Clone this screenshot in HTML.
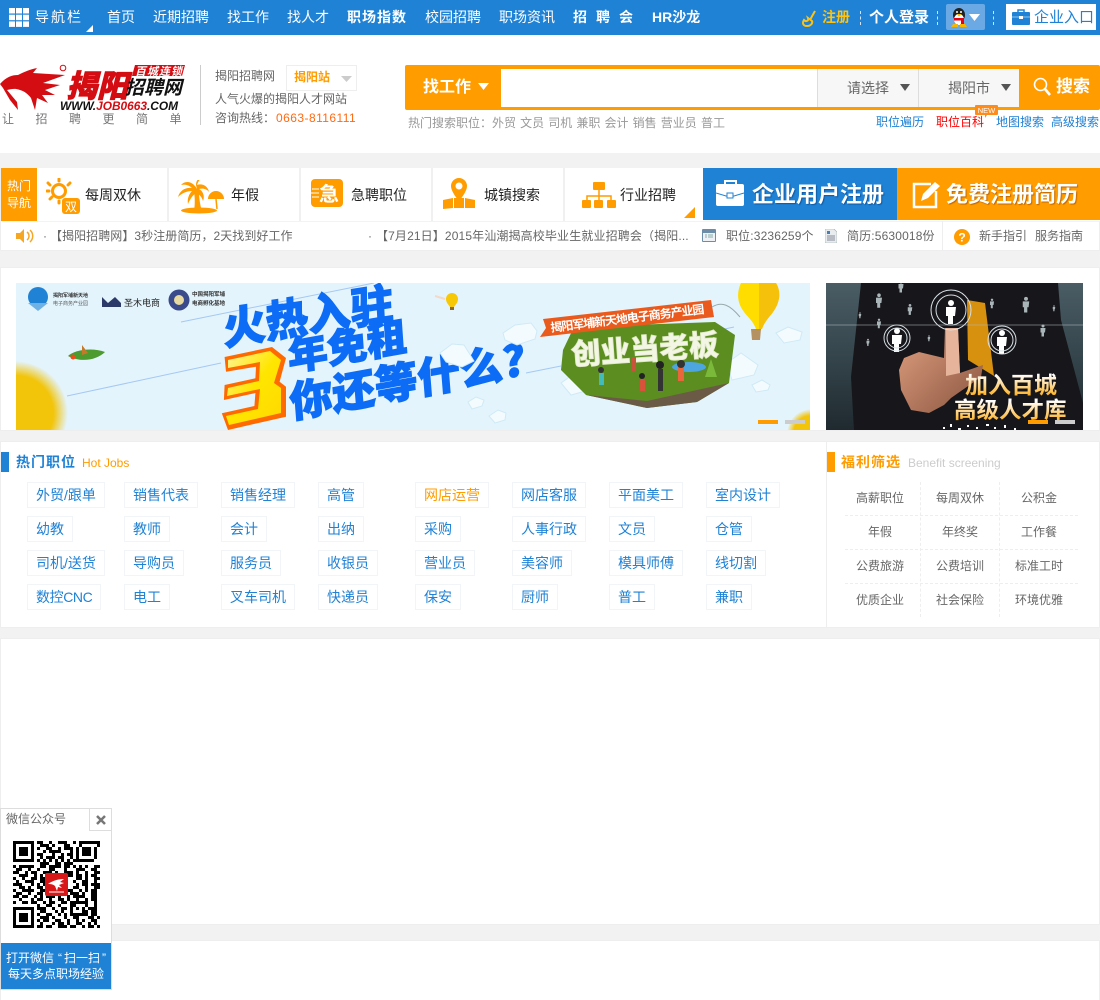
<!DOCTYPE html>
<html lang="zh"><head><meta charset="utf-8"><title>揭阳招聘网</title>
<style>
*{margin:0;padding:0;box-sizing:border-box}
html,body{width:1100px;height:1000px;overflow:hidden;background:#fff}
body{position:relative;font:12px/16px "Liberation Sans","WenQuanYi Zen Hei","Noto Sans CJK SC",sans-serif;color:#666;text-spacing-trim:space-all}
.a,.t,svg.a{position:absolute}
.t{white-space:nowrap}
.g{position:absolute;left:0;width:1100px;background:#f2f2f2}
.p{position:absolute;left:0;width:1100px;background:#fff;border:1px solid #eee}
.n{top:8px;font-size:14px;line-height:19px;color:#fff;position:absolute;white-space:nowrap}
.n.b{font-weight:bold}
.tag{position:absolute;height:26px;line-height:24px;font-size:14px;padding:0 8px;border:1px solid #f2f5f7;color:#1f82d5;white-space:nowrap;background:#fff}
.w{position:absolute;width:76px;text-align:center;color:#666;line-height:16px;white-space:nowrap}
.c{position:absolute;top:168px;height:53px;background:#fff;border-right:2px solid #f0f0f0}
.l{position:absolute;top:114px;line-height:16px;color:#1f82d5;white-space:nowrap}
</style></head><body>

<!-- top nav -->
<div class="a" style="left:0;top:0;width:1100px;height:35px;background:#1f82d5"></div>
<svg class="a" style="left:9px;top:8px" width="20" height="19" fill="#fff"><rect x="0" y="0" width="6" height="5.500"/><rect x="7" y="0" width="6" height="5.500"/><rect x="14" y="0" width="6" height="5.500"/><rect x="0" y="6.700" width="6" height="5.500"/><rect x="7" y="6.700" width="6" height="5.500"/><rect x="14" y="6.700" width="6" height="5.500"/><rect x="0" y="13.400" width="6" height="5.500"/><rect x="7" y="13.400" width="6" height="5.500"/><rect x="14" y="13.400" width="6" height="5.500"/></svg>
<div class="n" style="left:35px;letter-spacing:2px">导航栏</div>
<svg class="a" style="left:86px;top:25px" width="7" height="7"><path d="M7 0V7H0z" fill="#fff"/></svg>
<div class="n" style="left:107px">首页</div>
<div class="n" style="left:153px">近期招聘</div>
<div class="n" style="left:227px">找工作</div>
<div class="n" style="left:287px">找人才</div>
<div class="n b" style="left:347px;letter-spacing:1px">职场指数</div>
<div class="n" style="left:425px">校园招聘</div>
<div class="n" style="left:499px">职场资讯</div>
<div class="n b" style="left:573px;letter-spacing:9px">招聘会</div>
<div class="n b" style="left:652px">HR沙龙</div>

<svg class="a" style="left:801px;top:10px" width="18" height="17"><path d="M14 1 9.500 9M3 10c-2 3-1 6 3 6s6-3 5-5l-4-3c1 3-2 4-4 2z" fill="none" stroke="#ffc20e" stroke-width="2"/></svg>
<div class="n b" style="left:822px;color:#ffc20e">注册</div>
<div class="a" style="left:860px;top:11px;height:14px;border-left:1px dashed #cfe4f6"></div>
<div class="n b" style="left:869px;font-size:15px">个人登录</div>
<div class="a" style="left:937px;top:11px;height:14px;border-left:1px dashed #cfe4f6"></div>
<div class="a" style="left:946px;top:4px;width:39px;height:26px;background:#6aa9e4;border-radius:2px"></div>
<svg class="a" style="left:950px;top:8px" width="32" height="20"><ellipse cx="9" cy="7" rx="6" ry="7" fill="#222"/><ellipse cx="9" cy="11.500" rx="5" ry="5.500" fill="#fff"/><path d="M4 10h10v2.500H4z" fill="#e60012"/><path d="M11 12h3v4h-3z" fill="#e60012"/><path d="M3 16h5v3H1zM10 16h5l2 3h-7z" fill="#f7b500"/><path d="M6.500 6h5L9 8.500z" fill="#f7b500"/><circle cx="7" cy="4" r="1" fill="#fff"/><circle cx="11" cy="4" r="1" fill="#fff"/><path d="M19 6h11l-5.500 7z" fill="#fff"/></svg>
<div class="a" style="left:993px;top:11px;height:14px;border-left:1px dashed #cfe4f6"></div>
<div class="a" style="left:1006px;top:4px;width:90px;height:26px;background:#fff"></div>
<svg class="a" style="left:1012px;top:9px" width="18" height="17"><path d="M6 3V1h6v2" fill="none" stroke="#1f82d5" stroke-width="1.500"/><rect y="3" width="18" height="13" rx="1" fill="#1f82d5"/><path d="M0 8l18 0" stroke="#8cc4ef"/><rect x="7" y="7" width="4" height="3" fill="#fff"/></svg>
<div class="n" style="left:1034px;top:8px;font-size:15px;color:#1f82d5">企业入口</div>

<!-- logo -->
<svg class="a" style="left:0;top:62px" width="190" height="62">
<path d="M0 22C6 15 12 13 18 13 24 10 31 7 37 6L33 11 65 13 43 21 60 23 45 28 55 33 42 33 48 41 37 36 35 48 31 36C28 32 24 29 20 28 15 26 11 27 7 28L17 40 18 48 10 38 3 26Z" fill="#d40d12"/>
<circle cx="63" cy="6" r="2.800" fill="none" stroke="#d40d12"/>
<text x="66" y="35" font-family="'Noto Sans CJK SC',sans-serif" font-size="31" font-weight="900" font-style="italic" fill="#d40d12" stroke="#d40d12" stroke-width=".9">揭阳</text>
<path d="M135 3h50l-3 11h-50z" fill="#d40d12"/>
<text x="135" y="13" font-family="'Noto Sans CJK SC',sans-serif" font-size="11" font-weight="bold" font-style="italic" fill="#fff" letter-spacing="1">百城连锁</text>
<text x="125" y="32" font-family="'Noto Sans CJK SC',sans-serif" font-size="19" font-weight="bold" font-style="italic" fill="#111">招聘网</text>
<text x="60" y="48" font-family="'Liberation Sans',sans-serif" font-size="11.900" font-weight="bold" font-style="italic" fill="#111">WWW.<tspan fill="#d40d12">JOB0663</tspan>.COM</text>
</svg>
<div class="t" style="left:2px;top:111px;color:#777;letter-spacing:21.500px">让招聘更简单</div>
<div class="a" style="left:200px;top:65px;width:1px;height:60px;background:#ccc"></div>
<div class="t" style="left:215px;top:68px">揭阳招聘网</div>
<div class="a" style="left:286px;top:65px;width:71px;height:26px;border:1px solid #eee"></div>
<div class="t" style="left:294px;top:69px;font-weight:bold;color:#ff9c00">揭阳站</div>
<svg class="a" style="left:341px;top:76px" width="11" height="6"><path d="M0 0h11L5.500 6z" fill="#ccc"/></svg>
<div class="t" style="left:215px;top:91px">人气火爆的揭阳人才网站</div>
<div class="t" style="left:215px;top:110px">咨询热线：</div>
<div class="t" style="left:276px;top:110px;color:#ff6a13;letter-spacing:.45px">0663-8116111</div>

<!-- search -->
<div class="a" style="left:405px;top:65px;width:695px;height:45px;background:#ff9c00;border-radius:2px"></div>
<div class="t" style="left:423px;top:78px;font-size:16px;line-height:20px;font-weight:bold;color:#fff">找工作</div>
<svg class="a" style="left:478px;top:83px" width="11" height="7"><path d="M0 0h11L5.500 7z" fill="#fff"/></svg>
<div class="a" style="left:501px;top:69px;width:518px;height:38px;background:#fff"></div>
<div class="a" style="left:817px;top:69px;width:101px;height:38px;background:#f7f7f7;border-left:1px solid #ddd"></div>
<div class="a" style="left:918px;top:69px;width:101px;height:38px;background:#f7f7f7;border-left:1px solid #ddd"></div>
<div class="t" style="left:847px;top:79px;font-size:14px;line-height:18px;color:#666">请选择</div>
<div class="t" style="left:948px;top:79px;font-size:14px;line-height:18px;color:#666">揭阳市</div>
<svg class="a" style="left:900px;top:84px" width="10" height="7"><path d="M0 0h10L5 7z" fill="#555"/></svg>
<svg class="a" style="left:1001px;top:84px" width="10" height="7"><path d="M0 0h10L5 7z" fill="#555"/></svg>
<svg class="a" style="left:1033px;top:77px" width="19" height="20"><circle cx="7.500" cy="7.500" r="6" fill="none" stroke="#fff" stroke-width="1.600"/><path d="M12 12l5 6" stroke="#fff" stroke-width="2.600"/></svg>
<div class="t" style="left:1056px;top:77px;font-size:17px;line-height:20px;font-weight:bold;color:#fff">搜索</div>

<div class="t" style="left:408px;top:115px;color:#999;word-spacing:.8px">热门搜索职位：外贸 文员 司机 兼职 会计 销售 营业员 普工</div>
<div class="l" style="left:876px">职位遍历</div>
<div class="l" style="left:936px;color:#f00">职位百科</div>
<div class="l" style="left:996px">地图搜索</div>
<div class="l" style="left:1051px">高级搜索</div>
<svg class="a" style="left:975px;top:105px" width="24" height="13"><path d="M1 0h21a1 1 0 0 1 1 1v8a1 1 0 0 1-1 1H12l-2 3v-3H1a1 1 0 0 1-1-1V1a1 1 0 0 1 1-1z" fill="#ff8c1a"/><text x="11.500" y="8" text-anchor="middle" font-family="'Liberation Sans',sans-serif" font-size="7.500" fill="#fff">NEW</text></svg>

<!-- grey bands -->
<div class="g" style="top:153px;height:15px"></div>
<div class="g" style="top:251px;height:16px"></div>
<div class="g" style="top:430px;height:11px"></div>
<div class="g" style="top:627px;height:11px"></div>
<div class="g" style="top:924px;height:16px"></div>

<!-- hot nav -->
<div class="a" style="left:0;top:168px;width:1px;height:83px;background:#eee"></div>
<div class="a" style="left:1px;top:168px;width:36px;height:53px;background:#ff9c00"></div>
<div class="t" style="left:7px;top:178px;color:#fff;line-height:17px">热门<br>导航</div>
<div class="c" style="left:37px;width:132px"></div>
<div class="c" style="left:169px;width:132px"></div>
<div class="c" style="left:301px;width:132px"></div>
<div class="c" style="left:433px;width:132px"></div>
<div class="c" style="left:565px;width:138px;border:0"></div>

<svg class="a" style="left:46px;top:178px" width="36" height="36"><circle cx="13" cy="13" r="6.500" fill="none" stroke="#ff9c00" stroke-width="3"/><g stroke="#ff9c00" stroke-width="3" stroke-linecap="round"><path d="M13 1v2M13 23v2M1 13h2M2 5l2 2M24 5l-2 2M4 21l2-2"/></g><rect x="16" y="20" width="18" height="16" rx="3" fill="#ff9c00"/><text x="25" y="33" text-anchor="middle" font-size="12" fill="#fff" font-family="'WenQuanYi Zen Hei',sans-serif">双</text></svg>
<div class="t" style="left:85px;top:186px;font-size:14px;line-height:18px;color:#222">每周双休</div>
<svg class="a" style="left:178px;top:180px" width="48" height="35" fill="#ff9c00"><path d="M19 9C15 1 7 0 3 5c4-1 8 0 11 3C8 7 2 10 0 17c4-4 9-6 14-6-3 3-5 8-4 13 2-5 5-9 8-11 3 1 6 4 7 8 2-5 0-10-4-12 4-1 8 0 10 3-1-6-7-9-12-7 1-3 2-5 4-6-3-1-5 2-5 6z"/><path d="M16 11h5c0 7 1 14 3 20h-8c1-6 1-13 0-20z"/><path d="M30 19a8 8 0 0 1 16 0z"/><path d="M38 19l1 10" stroke="#ff9c00" stroke-width="1.500"/><ellipse cx="21" cy="30.500" rx="18" ry="3"/></svg>
<div class="t" style="left:231px;top:186px;font-size:14px;line-height:18px;color:#222">年假</div>
<svg class="a" style="left:311px;top:179px" width="33" height="29"><rect width="32" height="28" rx="4" fill="#ff9c00"/><path d="M1 10h7M0 14h8M1 18h7" stroke="#fff" stroke-width="1"/><text x="18" y="22" text-anchor="middle" font-size="20" font-weight="bold" fill="#fff" font-family="'Noto Sans CJK SC',sans-serif">急</text></svg>
<div class="t" style="left:351px;top:186px;font-size:14px;line-height:18px;color:#222">急聘职位</div>
<svg class="a" style="left:442px;top:178px" width="34" height="32" fill="#ff9c00"><path fill-rule="evenodd" d="M17 0a8 8 0 0 1 8 8c0 6-8 15-8 15S9 14 9 8a8 8 0 0 1 8-8zm0 4.500a3.500 3.500 0 1 0 0 7 3.500 3.500 0 0 0 0-7z"/><path d="M1 22l10-2v10l-10 1zM12 20l10 0v10H12zM23 20l10 2v8l-10 0z"/></svg>
<div class="t" style="left:484px;top:186px;font-size:14px;line-height:18px;color:#222">城镇搜索</div>
<svg class="a" style="left:582px;top:182px" width="34" height="26" fill="#ff9c00"><rect x="11" y="0" width="12" height="8" rx="1"/><path d="M17 8v6M5 18v-4h24v4" fill="none" stroke="#ff9c00" stroke-width="1.500"/><path d="M17 14v4" stroke="#ff9c00" stroke-width="1.500"/><rect x="0" y="18" width="9" height="8" rx="1"/><rect x="12" y="18" width="9" height="8" rx="1"/><rect x="25" y="18" width="9" height="8" rx="1"/></svg>
<div class="t" style="left:620px;top:186px;font-size:14px;line-height:18px;color:#222">行业招聘</div>
<svg class="a" style="left:684px;top:207px" width="11" height="11"><path d="M11 0v11H0z" fill="#ff9c00"/></svg>

<div class="a" style="left:703px;top:168px;width:194px;height:52px;background:#1f82d5"></div>
<div class="a" style="left:897px;top:168px;width:203px;height:52px;background:#ff9c00"></div>
<svg class="a" style="left:716px;top:180px" width="29" height="27"><path d="M9 5V1h11v4" fill="none" stroke="#fff" stroke-width="2"/><rect y="4" width="28" height="22" rx="2" fill="#fff"/><path d="M0 13l10 3h8l10-3" fill="none" stroke="#1f82d5"/><rect x="11" y="13" width="6" height="5" fill="#fff" stroke="#1f82d5"/></svg>
<div class="t" style="left:752px;top:182px;font-size:22px;line-height:26px;font-weight:bold;color:#fff;text-shadow:1px 1px 1px rgba(0,50,110,.5)">企业用户注册</div>
<svg class="a" style="left:912px;top:180px" width="29" height="29"><path d="M19 4H2v23h22V11" fill="none" stroke="#fff" stroke-width="2.500"/><path d="M9 21l2-7L23 2l5 4-12 12z" fill="#fff"/></svg>
<div class="t" style="left:946px;top:182px;font-size:22px;line-height:26px;font-weight:bold;color:#fff;text-shadow:1px 1px 1px rgba(150,70,0,.6)">免费注册简历</div>

<!-- ticker -->
<div class="a" style="left:0;top:221px;width:1100px;height:30px;background:#fff;border:1px solid #eee;border-top:1px solid #f3f3f3"></div>
<svg class="a" style="left:16px;top:229px" width="18" height="14"><path d="M0 4h4l4-4v14l-4-4H0z" fill="#f5a623"/><path d="M11 3a5 5 0 0 1 0 8M14 1a8 8 0 0 1 0 12" fill="none" stroke="#f5a623" stroke-width="1.500"/></svg>
<div class="t" style="left:43px;top:228px">·</div>
<div class="t" style="left:50px;top:228px;letter-spacing:.06px">【揭阳招聘网】3秒注册简历，2天找到好工作</div>
<div class="t" style="left:368px;top:228px">·</div>
<div class="t" style="left:376px;top:228px;letter-spacing:.13px">【7月21日】2015年汕潮揭高校毕业生就业招聘会（揭阳...</div>
<svg class="a" style="left:702px;top:229px" width="14" height="13"><rect width="14" height="13" rx="1" fill="#6c8ca8"/><rect x="1" y="4" width="12" height="8" fill="#eef2f6"/><path d="M3 6h2M6 6h5M3 8h2M6 8h5" stroke="#8aa"/></svg>
<div class="t" style="left:726px;top:228px;letter-spacing:.15px">职位:3236259个</div>
<svg class="a" style="left:825px;top:229px" width="12" height="14"><path d="M0 0h9l3 3v11H0z" fill="#e8ecef" stroke="#9aa" stroke-width=".6"/><path d="M2 2h3v3H2z" fill="#4a7fb5"/><path d="M2 7h8M2 9h8M2 11h8" stroke="#889"/></svg>
<div class="t" style="left:847px;top:228px;letter-spacing:.15px">简历:5630018份</div>
<div class="a" style="left:942px;top:221px;width:1px;height:30px;background:#eee"></div>
<svg class="a" style="left:954px;top:229px" width="16" height="16"><circle cx="8" cy="8" r="8" fill="#ff9c00"/><text x="8" y="12.500" text-anchor="middle" font-size="12" font-weight="bold" fill="#fff" font-family="'Liberation Sans',sans-serif">?</text></svg>
<div class="t" style="left:979px;top:228px">新手指引</div>
<div class="t" style="left:1035px;top:228px">服务指南</div>

<!-- banners -->
<div class="p" style="top:267px;height:164px"></div>
<svg class="a" style="left:16px;top:283px" width="794" height="147" viewBox="0 0 794 147">
<defs>
<radialGradient id="sun"><stop offset=".72" stop-color="#f2c40a"/><stop offset="1" stop-color="#f2c40a" stop-opacity="0"/></radialGradient>
<linearGradient id="yl" x1="0" x2="1" y1="0" y2="1"><stop offset="0" stop-color="#fff59a"/><stop offset=".5" stop-color="#ffe600"/><stop offset="1" stop-color="#ffd800"/></linearGradient>
</defs>
<rect width="794" height="147" fill="#e3f4fd"/>
<circle cx="0" cy="130" r="52" fill="url(#sun)"/>
<circle cx="795" cy="150" r="24" fill="url(#sun)"/>
<path d="M165 39 358 0M51 113 205 80M510 90 545 83M690 50 718 44" stroke="#a5c8f3" stroke-width="1" fill="none"/>
<g font-family="'Liberation Sans','Noto Sans CJK SC',sans-serif" font-weight="bold" fill="#fff">
<circle cx="22" cy="14" r="10" fill="#1f82d5"/><path d="M12 20h20l-10 8z" fill="#6fb0e5"/>
<circle cx="163" cy="17" r="10.500" fill="#3a4a8a"/><circle cx="163" cy="17" r="5" fill="#e8d9a0"/>
<path d="M86 14l6 6 7-6 6 6v4H86z" fill="#2c3a6a"/>
<text x="37" y="14" font-size="5" fill="#333">揭阳军埔新天地</text><text x="37" y="22" font-size="5" fill="#555" font-weight="normal">电子商务产业园</text>
<text x="108" y="23" font-size="9" fill="#222" font-weight="normal">圣木电商</text>
<text x="176" y="13" font-size="5.500" fill="#333">中国揭阳军埔</text><text x="176" y="22" font-size="5.500" fill="#333">电商孵化基地</text>
</g>
<g font-family="'Noto Sans CJK SC',sans-serif" font-weight="900" fill="#0d6cf5" stroke="#0d6cf5" stroke-width="1.200">
<text transform="translate(208 62) rotate(-9) skewX(-6)" font-size="43">火热入驻</text>
<text transform="translate(273 88) rotate(-10) skewX(-6) scale(1.03 1)" font-size="39">年免租</text>
<text transform="translate(275 135) rotate(-10.500) skewX(-6) scale(1.03 1)" font-size="42">你还等什么?</text>
</g>
<path d="M208.600 74 256 64 270 75 263.600 98.700 270 103.700 270 133.700 212 147 205.800 130.300 238.400 123 239.400 110 207.900 117 208.600 102 239.400 95.300 240 83.700 210 88.700z" fill="#ff6a00"/>
<path d="M212 77 254 68 265 77 258 100 265 105 265 130 213 142 210 133 242 126 244 106 211 113 212 105 243 98 244 79 212 85z" fill="url(#yl)"/>
<!-- rocket -->
<path d="M52 73c6-6 24-9 37-4-8 8-24 11-37 4z" fill="#4d9a2f"/><path d="M66 62l6 8-6 2z" fill="#c47a2a"/><circle cx="57" cy="74" r="2.500" fill="#f24b1b"/>
<!-- bulb -->
<path d="M430 16a6 6 0 0 1 12 0c0 4-3 6-4 8h-4c-1-2-4-4-4-8z" fill="#f7c806"/><path d="M419 13l10 3" stroke="#f4d8c8" stroke-width="2"/><rect x="434" y="24" width="4" height="3" fill="#8a6a2a"/>
<!-- clouds -->
<g fill="#f4fbfe" stroke="#cfeaf5"><path d="M487 50l12-8 16-2 6 8-2 8-18 6-12-5zM424 70l12-9 12 1 10 16-12 6-16-5zM452 119l8-5 8 3-2 6-10 3zM473 133l9-6 8 3-1 7-10 3zM760 50l12-6 14 5-2 8-16 3zM711 80l14-10 17 12-4 10-22 5zM736 102l10-5 8 5-2 5-12 2zM545 100l14-10 20 8-2 8-22 6z"/></g>
<!-- island -->
<path d="M547 67 558 44 699 39 719 52 713 100 681 119 631 125 570 112 545 87z" fill="#5b8d20"/>
<path d="M570 112 631 118 713 100 681 119 631 125z" fill="#6b5a45"/>
<g font-family="'Noto Sans CJK SC',sans-serif" font-weight="900" fill="#f3f6e5" stroke="#dfe8c4" stroke-width=".8">
<text transform="translate(556 82) rotate(-4)" font-size="29.500">创业当老板</text>
</g>
<g><circle cx="585" cy="87" r="3" fill="#333"/><rect x="583" y="90" width="5" height="12" fill="#4bb"/><rect x="642" y="86" width="5" height="22" fill="#333"/><circle cx="644" cy="82" r="4" fill="#222"/><rect x="624" y="96" width="5" height="12" fill="#d9533b"/><circle cx="626" cy="93" r="3" fill="#222"/><rect x="616" y="74" width="4" height="14" fill="#c9533b"/><ellipse cx="673" cy="84" rx="17" ry="5" fill="#4da6e0"/><rect x="662" y="84" width="6" height="14" fill="#e8663b"/><circle cx="665" cy="81" r="4" fill="#333"/><path d="M695 76l6 18h-12z" fill="#7ab93a"/></g>
<path d="M527 36 695 17 698 34 524 54 530 45z" fill="#ea5a1d"/>
<text transform="translate(535 49) rotate(-7)" font-family="'Noto Sans CJK SC',sans-serif" font-size="12" font-weight="bold" fill="#fff" textLength="155">揭阳军埔新天地电子商务产业园</text>
<path d="M696 24c10-6 18-2 28 10" fill="none" stroke="#9aa" stroke-width="1"/>
<!-- balloon -->
<path d="M725 0h35c5 8 4 18-1 26-4 7-10 11-13 20h-6c-3-9-10-13-14-20-5-8-5-18-1-26z" fill="#ffdd00"/>
<path d="M743 0h17c5 8 4 18-1 26-4 7-10 11-13 20h-3z" fill="#f5c10a"/>
<path d="M735 46h10l-1 11h-8z" fill="#b59060"/>
<rect x="742" y="137" width="20" height="4" fill="#ff9c00"/><rect x="769" y="137" width="20" height="4" fill="#ccc"/>
</svg>

<svg class="a" style="left:826px;top:283px" width="257" height="147" viewBox="0 0 257 147">
<defs>
<linearGradient id="bg2" x1="0" y1="0" x2="0" y2="1"><stop offset="0" stop-color="#4a5c64"/><stop offset=".5" stop-color="#35454c"/><stop offset="1" stop-color="#1f2a2f"/></linearGradient>
<linearGradient id="sk" x1="0" y1="0" x2="1" y2="1"><stop offset="0" stop-color="#dfa080"/><stop offset="1" stop-color="#8a5440"/></linearGradient>
<linearGradient id="gt" x1="0" y1="0" x2="0" y2="1"><stop offset=".25" stop-color="#fff"/><stop offset=".85" stop-color="#ffb52a"/></linearGradient>
<g id="pp"><circle cx="0" cy="-8" r="3"/><path d="M-5-4h10l-1 9-2 0v8H-3v-8h-2z"/></g>
</defs>
<rect width="257" height="147" fill="url(#bg2)"/>
<path d="M25 94 35 0H232L235 37 257 120V147H28z" fill="#17161a"/>
<path d="M141 17 159 20 168 93 142 77z" fill="#d8900f"/>
<path d="M73 87 78 75 93 69 118 75 119 45 132 45 134 90 157 82 155 94 125 115 118 122 103 130 85 127 75 107z" fill="url(#sk)"/>
<path d="M120 45h12l2 45-14 3z" fill="#e6b49a"/>
<g fill="#fff">
<use href="#pp" x="125" y="28"/>
<use href="#pp" x="71" y="56"/><use href="#pp" x="176" y="58"/>
</g>
<g fill="#cfdde3" opacity=".8"><use href="#pp" transform="translate(53 17) scale(.6)"/><use href="#pp" transform="translate(84 26) scale(.45)"/><use href="#pp" transform="translate(200 21) scale(.65)"/><use href="#pp" transform="translate(217 47) scale(.5)"/><use href="#pp" transform="translate(53 40) scale(.4)"/><use href="#pp" transform="translate(75 3) scale(.5)"/><use href="#pp" transform="translate(166 20) scale(.4)"/><use href="#pp" transform="translate(42 59) scale(.3)"/><use href="#pp" transform="translate(34 32) scale(.25)"/><use href="#pp" transform="translate(103 55) scale(.25)"/><use href="#pp" transform="translate(228 25) scale(.25)"/></g>
<g fill="none" stroke="#d7e1e6" stroke-width="1"><circle cx="125" cy="27" r="20"/><circle cx="125" cy="27" r="15"/><circle cx="71" cy="55" r="13"/><circle cx="71" cy="55" r="10"/><circle cx="176" cy="57" r="14"/><circle cx="176" cy="57" r="11"/></g>
<path d="M0 42H257" stroke="#aeb9bd" stroke-width="1" opacity=".55"/>
<path d="M117 144h2v2h-2zM124 141h2v3h-2zM132 145h3v2h-3zM141 142h2v2h-2zM150 144h2v2h-2zM160 141h3v2h-3zM168 144h2v2h-2zM178 142h2v3h-2zM188 145h2v2h-2z" fill="#fff"/>
<g font-family="'Noto Sans CJK SC',sans-serif" font-weight="bold" fill="url(#gt)"><text x="139" y="110" font-size="23">加入百城</text><text x="128" y="135" font-size="22.500">高级人才库</text></g>
<rect x="202" y="137" width="20" height="4" fill="#ff9c00"/><rect x="229" y="137" width="20" height="4" fill="#ccc"/>
</svg>

<!-- jobs -->
<div class="p" style="top:441px;height:187px"></div>
<div class="a" style="left:826px;top:441px;width:1px;height:186px;background:#eee"></div>
<div class="a" style="left:1px;top:452px;width:8px;height:20px;background:#1f82d5"></div>
<div class="t" style="left:16px;top:453px;font-size:14px;line-height:19px;font-weight:bold;color:#1f82d5;letter-spacing:1px">热门职位</div>
<div class="t" style="left:82px;top:455px;color:#ff9c00">Hot Jobs</div>
<div class="tag" style="left:27px;top:482px">外贸/跟单</div><div class="tag" style="left:124px;top:482px">销售代表</div><div class="tag" style="left:221px;top:482px">销售经理</div><div class="tag" style="left:318px;top:482px">高管</div><div class="tag" style="left:415px;top:482px;color:#ff9c00">网店运营</div><div class="tag" style="left:512px;top:482px">网店客服</div><div class="tag" style="left:609px;top:482px">平面美工</div><div class="tag" style="left:706px;top:482px">室内设计</div>
<div class="tag" style="left:27px;top:516px">幼教</div><div class="tag" style="left:124px;top:516px">教师</div><div class="tag" style="left:221px;top:516px">会计</div><div class="tag" style="left:318px;top:516px">出纳</div><div class="tag" style="left:415px;top:516px">采购</div><div class="tag" style="left:512px;top:516px">人事行政</div><div class="tag" style="left:609px;top:516px">文员</div><div class="tag" style="left:706px;top:516px">仓管</div>
<div class="tag" style="left:27px;top:550px">司机/送货</div><div class="tag" style="left:124px;top:550px">导购员</div><div class="tag" style="left:221px;top:550px">服务员</div><div class="tag" style="left:318px;top:550px">收银员</div><div class="tag" style="left:415px;top:550px">营业员</div><div class="tag" style="left:512px;top:550px">美容师</div><div class="tag" style="left:609px;top:550px">模具师傅</div><div class="tag" style="left:706px;top:550px">线切割</div>
<div class="tag" style="left:27px;top:584px;letter-spacing:-.4px">数控CNC</div><div class="tag" style="left:124px;top:584px">电工</div><div class="tag" style="left:221px;top:584px">叉车司机</div><div class="tag" style="left:318px;top:584px">快递员</div><div class="tag" style="left:415px;top:584px">保安</div><div class="tag" style="left:512px;top:584px">厨师</div><div class="tag" style="left:609px;top:584px">普工</div><div class="tag" style="left:706px;top:584px">兼职</div>

<div class="a" style="left:827px;top:452px;width:8px;height:20px;background:#ff9c00"></div>
<div class="t" style="left:841px;top:453px;font-size:14px;line-height:19px;font-weight:bold;color:#ff9c00;letter-spacing:1px">福利筛选</div>
<div class="t" style="left:908px;top:455px;color:#ccc">Benefit screening</div>
<div class="a" style="left:845px;top:515px;width:233px;border-top:1px dashed #eee"></div>
<div class="a" style="left:845px;top:549px;width:233px;border-top:1px dashed #eee"></div>
<div class="a" style="left:845px;top:583px;width:233px;border-top:1px dashed #eee"></div>
<div class="a" style="left:920px;top:482px;height:135px;border-left:1px dashed #eee"></div>
<div class="a" style="left:999px;top:482px;height:135px;border-left:1px dashed #eee"></div>
<div class="w" style="left:842px;top:490px">高薪职位</div><div class="w" style="left:922px;top:490px">每周双休</div><div class="w" style="left:1001px;top:490px">公积金</div>
<div class="w" style="left:842px;top:524px">年假</div><div class="w" style="left:922px;top:524px">年终奖</div><div class="w" style="left:1001px;top:524px">工作餐</div>
<div class="w" style="left:842px;top:558px">公费旅游</div><div class="w" style="left:922px;top:558px">公费培训</div><div class="w" style="left:1001px;top:558px">标准工时</div>
<div class="w" style="left:842px;top:592px">优质企业</div><div class="w" style="left:922px;top:592px">社会保险</div><div class="w" style="left:1001px;top:592px">环境优雅</div>

<!-- empty panels -->
<div class="p" style="top:638px;height:287px"></div>
<div class="p" style="top:940px;height:70px"></div>

<!-- wechat float -->
<div class="a" style="left:0;top:808px;width:112px;height:182px;background:#fff;border:1px solid #ddd"></div>
<div class="t" style="left:6px;top:811px;color:#666">微信公众号</div>
<div class="a" style="left:89px;top:808px;width:23px;height:23px;background:#fff;border:1px solid #ddd"></div>
<svg class="a" style="left:96px;top:815px" width="10" height="10"><path d="M1 1l8 8M9 1l-8 8" stroke="#777" stroke-width="2.500"/></svg>
<svg class="a" style="left:13px;top:841px" width="87" height="87" viewBox="0 0 29 29" shape-rendering="crispEdges">
<path fill="none" stroke="#000" d="M0 .5h7m1 0h2m2 0h1m2 0h3m2 0h1m1 0h7M0 1.500h1m5 0h1m2 0h3m1 0h1m3 0h2m3 0h1m5 0h1M0 2.500h1m1 0h3m1 0h1m1 0h1m2 0h2m2 0h1m1 0h3m1 0h1m1 0h3m1 0h1M0 3.500h1m1 0h3m1 0h1m3 0h1m1 0h4m3 0h1m1 0h1m1 0h3m1 0h1M0 4.500h1m1 0h3m1 0h1m1 0h2m3 0h1m2 0h1m1 0h2m1 0h1m1 0h3m1 0h1M0 5.500h1m5 0h1m2 0h1m1 0h3m1 0h2m2 0h1m1 0h1m5 0h1M0 6.500h7m1 0h1m1 0h1m1 0h1m1 0h1m1 0h1m1 0h1m1 0h7M9 7.500h3m2 0h2m1 0h3M0 8.500h1m1 0h5m2 0h2m1 0h4m1 0h2m1 0h1m1 0h1m1 0h1m2 0h2M1 9.500h2m2 0h1m2 0h1m3 0h2m3 0h1m3 0h3m2 0h2M0 10.500h2m2 0h1m1 0h2m2 0h3m1 0h1m2 0h3m1 0h1m2 0h1m2 0h2M2 11.500h3m2 0h1m1 0h1m1 0h2m5 0h2m1 0h2m1 0h1m1 0h2M0 12.500h1m2 0h1m2 0h2m1 0h2m10 0h2m1 0h1m2 0h2M1 13.500h1m2 0h3m2 0h2m9 0h1m2 0h2m2 0h1M0 14.500h3m3 0h1m1 0h1m1 0h2m9 0h1m1 0h2m1 0h3M2 15.500h2m1 0h1m2 0h2m1 0h1m8 0h2m2 0h1m2 0h2M0 16.500h1m2 0h4m2 0h2m1 0h8m2 0h1m1 0h1m1 0h2M1 17.500h2m2 0h1m2 0h2m3 0h2m2 0h1m1 0h3m1 0h1m2 0h2M0 18.500h2m1 0h2m2 0h1m1 0h1m1 0h3m1 0h1m2 0h1m1 0h4m2 0h2M2 19.500h1m3 0h1m1 0h2m2 0h1m2 0h2m1 0h1m2 0h1m2 0h1m1 0h2M0 20.500h1m2 0h2m1 0h2m2 0h1m1 0h2m2 0h2m1 0h6m2 0h1M8 21.500h1m2 0h2m2 0h1m3 0h2m3 0h1m2 0h1m1 0h1M0 22.500h7m1 0h3m2 0h1m2 0h2m1 0h1m1 0h1m1 0h1m1 0h3M0 23.500h1m5 0h1m2 0h2m3 0h1m1 0h1m2 0h1m3 0h2m1 0h2M0 24.500h1m1 0h3m1 0h1m1 0h1m2 0h2m2 0h1m1 0h1m1 0h6m1 0h2M0 25.500h1m1 0h3m1 0h1m2 0h3m1 0h1m3 0h1m2 0h2m3 0h2m1 0h1M0 26.500h1m1 0h3m1 0h1m1 0h1m1 0h2m2 0h2m2 0h1m2 0h1m1 0h1m2 0h2M0 27.500h1m5 0h1m2 0h1m3 0h1m1 0h2m1 0h1m2 0h2m2 0h1m1 0h1M0 28.500h7m1 0h2m1 0h2m2 0h3m1 0h2m2 0h1m1 0h2m1 0h1"/>
</svg>
<svg class="a" style="left:45px;top:873px" width="23" height="23"><rect width="23" height="23" rx="2" fill="#d81818"/><path d="M3 11c4-3 10-5 16-5l-4 3 4 1-5 2 3 3-4-1-1 4-2-5c-2-2-5-2-7-2z" fill="#fff"/><path d="M4 19h15" stroke="#fff"/></svg>
<div class="a" style="left:1px;top:943px;width:110px;height:46px;background:#1f82d5"></div>
<div class="t" style="left:1px;top:950px;width:110px;text-align:center;color:#fff">打开微信<span style="margin-left:4px;margin-right:2px">“</span>扫一扫<span style="margin-left:2px">”</span></div>
<div class="t" style="left:1px;top:966px;width:110px;text-align:center;color:#fff">每天多点职场经验</div>
</body></html>
